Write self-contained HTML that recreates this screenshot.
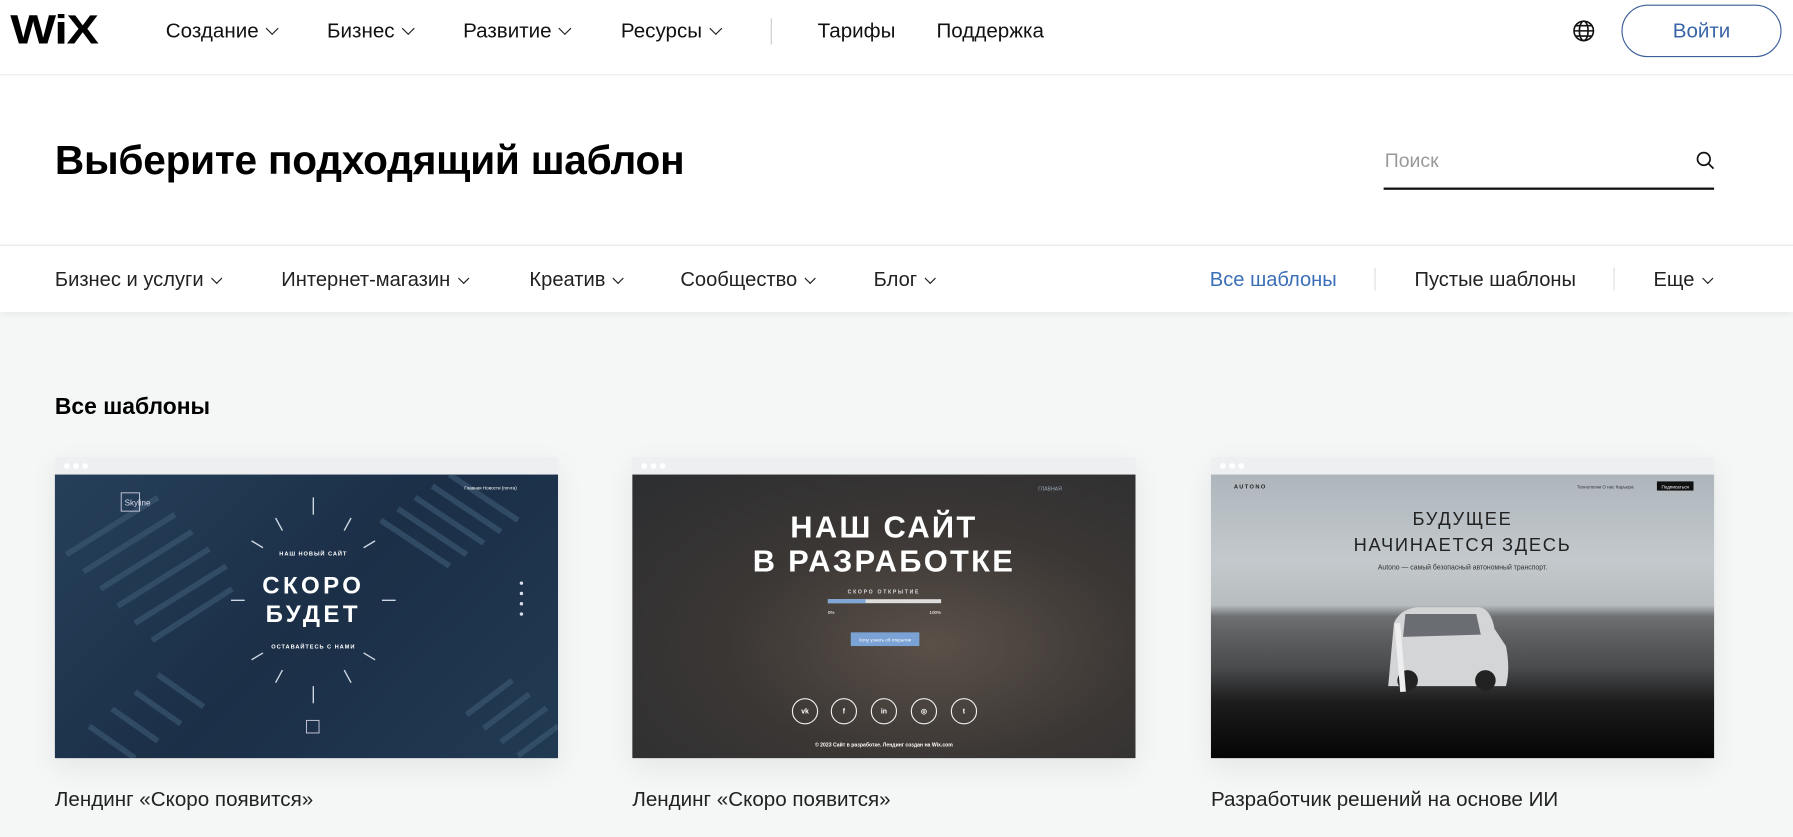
<!DOCTYPE html>
<html><head><meta charset="utf-8">
<style>
*{margin:0;padding:0;box-sizing:border-box}
html,body{width:1793px;height:837px;overflow:hidden;background:#f5f6f6}
#w{width:1568px;height:732px;transform:scale(1.14349);transform-origin:0 0;position:relative;font-family:"Liberation Sans",sans-serif;color:#000;background:#f5f6f6}
.abs{position:absolute}
.hdr{left:0;top:0;width:1568px;height:66px;background:#fff;border-bottom:1px solid #eaeaea}
.nav{top:17px;font-size:18px;color:#111;white-space:nowrap}
.chev{display:inline-block;width:8px;height:8px;border-right:1.5px solid #222;border-bottom:1.5px solid #222;transform:rotate(45deg);margin-left:8px;position:relative;top:-4px}
.sm .chev{width:7px;height:7px;margin-left:8px;top:-3px}
.top{left:0;top:66px;width:1568px;height:148px;background:#fff}
.cat{left:0;top:214px;width:1568px;height:59px;background:#fff;border-top:1px solid #e6e6e6;box-shadow:0 2px 4px rgba(0,0,0,.05)}
.ct{top:234px;font-size:17.6px;color:#222;white-space:nowrap}
.card{top:400px;width:440px;height:263px;box-shadow:0 8px 24px rgba(0,0,0,.07)}
.bar{height:15px;background:#eeeff1;position:relative}
.bar i{position:absolute;top:5px;width:5px;height:5px;border-radius:50%;background:#fff}
.img{height:248px;position:relative;overflow:hidden}
.cap{top:689px;font-size:18px;color:#222}
</style></head><body><div id="w">
<div class="abs hdr"></div>
<div class="abs" style="left:9px;top:5px;font-size:36px;font-weight:900;letter-spacing:-1px;transform:scaleX(1.18);transform-origin:0 0">WiX</div>
<div class="abs nav" style="left:145px">Создание<span class="chev"></span></div>
<div class="abs nav" style="left:286px">Бизнес<span class="chev"></span></div>
<div class="abs nav" style="left:405px">Развитие<span class="chev"></span></div>
<div class="abs nav" style="left:543px">Ресурсы<span class="chev"></span></div>
<div class="abs" style="left:674px;top:16px;width:1px;height:23px;background:#ccc"></div>
<div class="abs nav" style="left:715px">Тарифы</div>
<div class="abs nav" style="left:819px">Поддержка</div>
<svg class="abs" style="left:1375px;top:17px" width="20" height="20" viewBox="0 0 20 20" fill="none" stroke="#111" stroke-width="1.4"><circle cx="10" cy="10" r="8.5"/><ellipse cx="10" cy="10" rx="3.8" ry="8.5"/><path d="M1.5 10h17M3 5.5h14M3 14.5h14"/></svg>
<div class="abs" style="left:1418px;top:4px;width:140px;height:46px;border:1.5px solid #3b5f99;border-radius:23px;color:#3a66a8;font-size:18px;text-align:center;line-height:44px">Войти</div>

<div class="abs top"></div>
<div class="abs" style="left:48px;top:120px;font-size:35.5px;font-weight:bold;letter-spacing:-.2px">Выберите подходящий шаблон</div>
<div class="abs" style="left:1211px;top:131px;font-size:17px;color:#999">Поиск</div>
<svg class="abs" style="left:1483px;top:132px" width="17" height="17" viewBox="0 0 17 17" fill="none" stroke="#111" stroke-width="1.5"><circle cx="7" cy="7" r="5.5"/><path d="M11 11l4.5 4.5"/></svg>
<div class="abs" style="left:1210px;top:164px;width:289px;height:1.5px;background:#111"></div>

<div class="abs cat"></div>
<div class="abs ct sm" style="left:48px">Бизнес и услуги<span class="chev"></span></div>
<div class="abs ct sm" style="left:246px">Интернет-магазин<span class="chev"></span></div>
<div class="abs ct sm" style="left:463px">Креатив<span class="chev"></span></div>
<div class="abs ct sm" style="left:595px">Сообщество<span class="chev"></span></div>
<div class="abs ct sm" style="left:764px">Блог<span class="chev"></span></div>
<div class="abs ct" style="left:1058px;color:#3a6fb8">Все шаблоны</div>
<div class="abs" style="left:1202px;top:234px;width:1px;height:20px;background:#ddd"></div>
<div class="abs ct" style="left:1237px">Пустые шаблоны</div>
<div class="abs" style="left:1411px;top:234px;width:1px;height:20px;background:#ddd"></div>
<div class="abs ct sm" style="left:1446px">Еще<span class="chev"></span></div>

<div class="abs" style="left:48px;top:345px;font-size:20px;font-weight:bold">Все шаблоны</div>

<!-- card 1 -->
<div class="abs card" style="left:48px">
<div class="bar"><i style="left:8px"></i><i style="left:16px"></i><i style="left:24px"></i></div>
<div class="img" style="background:linear-gradient(135deg,#26405a,#1b2f47 50%,#213a52)">
<svg width="440" height="248" style="position:absolute;left:0;top:0">
<g stroke="#3b5670" stroke-width="5" opacity=".7">
<path d="M10 70l80 -50M25 85l80 -50M40 100l80 -50M55 115l80 -50M70 130l80 -50M85 145l70 -45"/>
<path d="M300 30l60 40M315 20l60 40M330 10l60 40M345 0l60 40M285 40l60 40"/>
<path d="M30 220l40 28M50 205l40 28M70 190l40 28M90 175l40 28"/>
<path d="M360 210l40 -30M375 222l40 -30M390 234l40 -30M405 246l35 -26"/>
</g>
<g stroke="#cfd8e2" stroke-width="1.2">
<path d="M226 20v15M226 185v15M154 110h12M286 110h12M172 58l10 6M280 58l-10 6M172 162l10 -6M280 162l-10 -6M193 38l6 11M259 38l-6 11M193 182l6 -11M259 182l-6 -11"/>
</g>
<rect x="58" y="16" width="16" height="16" fill="none" stroke="#ccd" stroke-width=".8"/>
<text x="61" y="27" font-size="7" fill="#dde">Skyline</text>
<text x="358" y="13" font-size="4" fill="#fff">Главная   Новости (почта)</text>
<text x="226" y="71" font-size="5" fill="#fff" text-anchor="middle" font-weight="bold" letter-spacing=".8">НАШ НОВЫЙ САЙТ</text>
<text x="226" y="104" font-size="21" fill="#fff" text-anchor="middle" font-weight="bold" letter-spacing="3">СКОРО</text>
<text x="226" y="129" font-size="21" fill="#fff" text-anchor="middle" font-weight="bold" letter-spacing="3">БУДЕТ</text>
<text x="226" y="152" font-size="5" fill="#fff" text-anchor="middle" font-weight="bold" letter-spacing=".8">ОСТАВАЙТЕСЬ С НАМИ</text>
<rect x="220" y="215" width="11" height="11" fill="none" stroke="#ccd" stroke-width=".8"/>
<g fill="#dde"><circle cx="408" cy="95" r="1.5"/><circle cx="408" cy="104" r="1.5"/><circle cx="408" cy="113" r="1.5"/><circle cx="408" cy="122" r="1.5"/></g>
</svg></div></div>
<div class="abs cap" style="left:48px">Лендинг «Скоро появится»</div>

<!-- card 2 -->
<div class="abs card" style="left:553px">
<div class="bar"><i style="left:8px"></i><i style="left:16px"></i><i style="left:24px"></i></div>
<div class="img" style="background:radial-gradient(ellipse at 60% 60%,#5a5048,#3a3634 50%,#2c2e31)">
<svg width="440" height="248" style="position:absolute;left:0;top:0">
<text x="355" y="14" font-size="4.5" fill="#9ab">ГЛАВНАЯ</text>
<g font-family="Liberation Sans Narrow,Liberation Sans" font-weight="bold" fill="#fff" text-anchor="middle" font-size="27" letter-spacing="2">
<text x="220" y="55">НАШ САЙТ</text><text x="220" y="85">В РАЗРАБОТКЕ</text></g>
<text x="220" y="104" font-size="4.5" fill="#ddd" text-anchor="middle" letter-spacing="1.5" font-weight="bold">СКОРО ОТКРЫТИЕ</text>
<rect x="171" y="109" width="99" height="3.5" fill="#ddd"/><rect x="171" y="109" width="33" height="3.5" fill="#7fa7d6"/>
<text x="171" y="122" font-size="4" fill="#fff">0%</text><text x="270" y="122" font-size="4" fill="#fff" text-anchor="end">100%</text>
<rect x="191" y="138" width="60" height="12" fill="#7aa2d4"/>
<text x="221" y="146" font-size="4" fill="#fff" text-anchor="middle">Хочу узнать об открытии</text>
<g fill="none" stroke="#eee" stroke-width="1"><circle cx="151" cy="207" r="11"/><circle cx="185" cy="207" r="11"/><circle cx="220" cy="207" r="11"/><circle cx="255" cy="207" r="11"/><circle cx="290" cy="207" r="11"/></g>
<g fill="#fff" font-size="6" text-anchor="middle" font-weight="bold"><text x="151" y="209">vk</text><text x="185" y="209">f</text><text x="220" y="209">in</text><text x="255" y="209">◎</text><text x="290" y="209">t</text></g>
<text x="220" y="238" font-size="4.5" fill="#fff" text-anchor="middle" font-weight="bold">© 2023 Сайт в разработке. Лендинг создан на Wix.com</text>
</svg></div></div>
<div class="abs cap" style="left:553px">Лендинг «Скоро появится»</div>

<!-- card 3 -->
<div class="abs card" style="left:1059px">
<div class="bar"><i style="left:8px"></i><i style="left:16px"></i><i style="left:24px"></i></div>
<div class="img" style="background:linear-gradient(180deg,#aeb6bd 0%,#c3c9cc 30%,#b8bdc0 46%,#6e7072 50%,#5f6163 56%,#4a4b4c 68%,#1d1d1e 80%,#050505 100%)">
<svg width="440" height="248" style="position:absolute;left:0;top:0">
<text x="20" y="12" font-size="5" font-weight="bold" fill="#222" letter-spacing="1.2">AUTONO</text>
<text x="320" y="12" font-size="4" fill="#333">Технологии   О нас   Карьера</text>
<rect x="390" y="6" width="32" height="8" fill="#111"/><text x="394" y="12" font-size="4" fill="#fff">Подписаться</text>
<text x="220" y="44" font-size="16" fill="#222" text-anchor="middle" letter-spacing="1.5">БУДУЩЕЕ</text>
<text x="220" y="67" font-size="16" fill="#222" text-anchor="middle" letter-spacing="1.5">НАЧИНАЕТСЯ ЗДЕСЬ</text>
<text x="220" y="83" font-size="6" fill="#333" text-anchor="middle">Autono — самый безопасный автономный транспорт.</text>
<path d="M155 185 L160 130 Q165 118 180 116 L235 116 Q245 118 248 135 L258 150 Q262 170 258 185 Z" fill="#d4d5d6"/>
<path d="M170 122 L232 122 L236 140 L168 142 Z" fill="#6a6e72"/>
<circle cx="172" cy="180" r="9" fill="#222"/><circle cx="240" cy="180" r="9" fill="#222"/>
<path d="M163 130 L168 190" stroke="#eee" stroke-width="5"/>
</svg></div></div>
<div class="abs cap" style="left:1059px">Разработчик решений на основе ИИ</div>
</div></body></html>
